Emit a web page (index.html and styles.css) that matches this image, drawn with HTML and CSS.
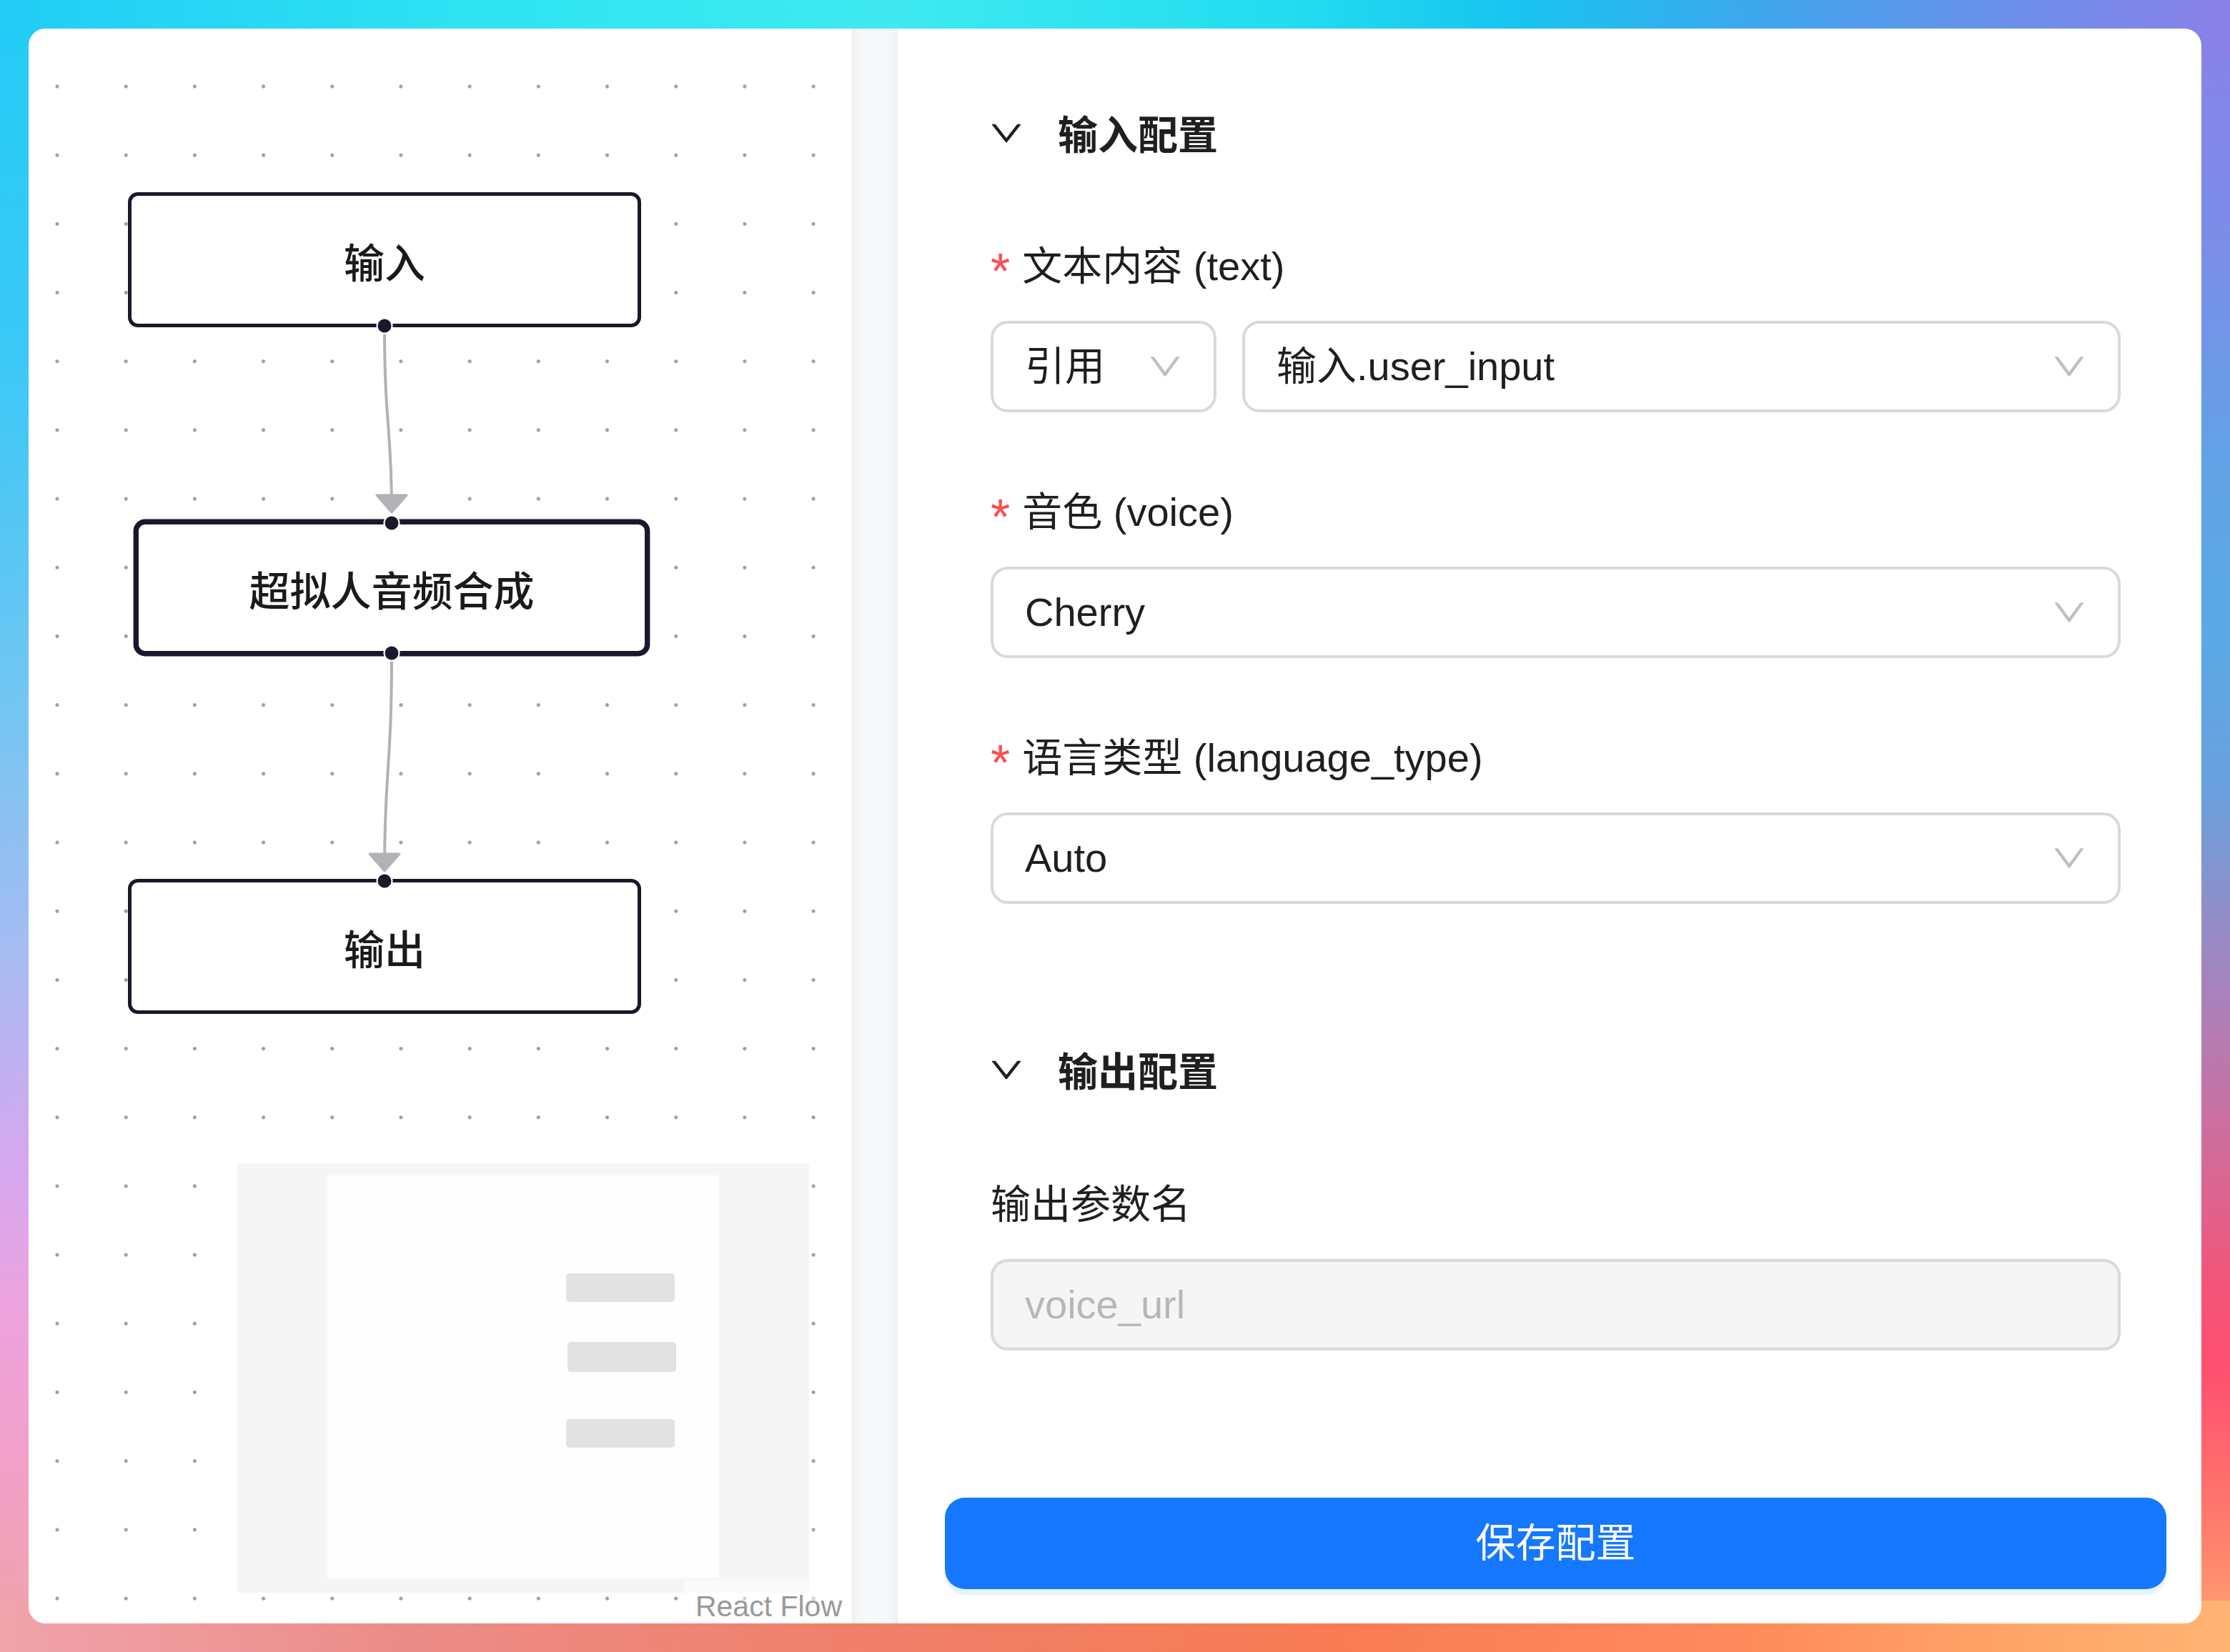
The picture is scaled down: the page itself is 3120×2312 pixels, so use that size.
FILE: index.html
```html
<!DOCTYPE html>
<html lang="zh-CN">
<head>
<meta charset="utf-8">
<title>超拟人音频合成</title>
<link rel="stylesheet" href="styles.css">
</head>
<body>
<div class="card">
  <div class="canvas">
    <svg class="edges" width="1152" height="2232" viewBox="0 0 1152 2232">
      <path class="edge" d="M498 418 C498 556 508 556 508 676"/>
      <polygon class="marker" points="487,653 529,653 508,677"/>
      <path class="edge" d="M508 874 C508 1036 498 1036 498 1176"/>
      <polygon class="marker" points="477,1155 519,1155 498,1179"/>
    </svg>

    <div class="node node-a">输入<span class="handle bottom"></span></div>
    <div class="node node-b selected"><span class="handle top"></span>超拟人音频合成<span class="handle bottom"></span></div>
    <div class="node node-c"><span class="handle top"></span>输出</div>

    <div class="minimap">
      <svg width="800" height="601" viewBox="0 0 800 601">
        <rect class="mm-mask" x="0" y="0" width="800" height="601"/>
        <rect class="mm-view" x="126" y="17" width="548" height="564"/>
        <rect class="mm-node" x="460" y="154" width="152" height="40" rx="5"/>
        <rect class="mm-node" x="462" y="250" width="152" height="42" rx="5"/>
        <rect class="mm-node" x="460" y="358" width="152" height="40" rx="5"/>
      </svg>
    </div>
    <div class="attribution">React Flow</div>
  </div>

  <div class="divider"></div>

  <div class="panel">
    <div class="form">
      <div class="section-head first">
        <svg class="caret" viewBox="64 64 896 896"><g transform="rotate(90 512 512)"><path d="M765.7 486.8L314.9 134.7A7.97 7.97 0 00302 141v77.3c0 4.9 2.3 9.6 6.1 12.6l360 281.1-360 281.1c-3.9 3-6.1 7.7-6.1 12.6V883c0 6.7 7.7 10.4 12.9 6.3l450.8-352.1a31.960 31.960 0 000-50.4z"/></g></svg>
        <span>输入配置</span>
      </div>

      <div class="field first-field">
        <div class="label"><span class="req">*</span>文本内容 (text)</div>
        <div class="row">
          <div class="select ref">
            <span class="value">引用</span>
            <svg class="arrow" viewBox="64 64 896 896"><path d="M884 256h-75c-5.1 0-9.9 2.5-12.9 6.6L512 654.2 227.9 262.6c-3-4.1-7.8-6.6-12.9-6.6h-75c-6.5 0-10.3 7.4-6.5 12.7l352.6 486.1c12.8 17.6 39 17.6 51.7 0l352.6-486.1c3.9-5.3.1-12.7-6.4-12.7z"/></svg>
          </div>
          <div class="select grow">
            <span class="value">输入.user_input</span>
            <svg class="arrow" viewBox="64 64 896 896"><path d="M884 256h-75c-5.1 0-9.9 2.5-12.9 6.6L512 654.2 227.9 262.6c-3-4.1-7.8-6.6-12.9-6.6h-75c-6.5 0-10.3 7.4-6.5 12.7l352.6 486.1c12.8 17.6 39 17.6 51.7 0l352.6-486.1c3.9-5.3.1-12.7-6.4-12.7z"/></svg>
          </div>
        </div>
      </div>

      <div class="field">
        <div class="label"><span class="req">*</span>音色 (voice)</div>
        <div class="select">
          <span class="value">Cherry</span>
          <svg class="arrow" viewBox="64 64 896 896"><path d="M884 256h-75c-5.1 0-9.9 2.5-12.9 6.6L512 654.2 227.9 262.6c-3-4.1-7.8-6.6-12.9-6.6h-75c-6.5 0-10.3 7.4-6.5 12.7l352.6 486.1c12.8 17.6 39 17.6 51.7 0l352.6-486.1c3.9-5.3.1-12.7-6.4-12.7z"/></svg>
        </div>
      </div>

      <div class="field">
        <div class="label"><span class="req">*</span>语言类型 (language_type)</div>
        <div class="select">
          <span class="value">Auto</span>
          <svg class="arrow" viewBox="64 64 896 896"><path d="M884 256h-75c-5.1 0-9.9 2.5-12.9 6.6L512 654.2 227.9 262.6c-3-4.1-7.8-6.6-12.9-6.6h-75c-6.5 0-10.3 7.4-6.5 12.7l352.6 486.1c12.8 17.6 39 17.6 51.7 0l352.6-486.1c3.9-5.3.1-12.7-6.4-12.7z"/></svg>
        </div>
      </div>

      <div class="section-head second">
        <svg class="caret" viewBox="64 64 896 896"><g transform="rotate(90 512 512)"><path d="M765.7 486.8L314.9 134.7A7.97 7.97 0 00302 141v77.3c0 4.9 2.3 9.6 6.1 12.6l360 281.1-360 281.1c-3.9 3-6.1 7.7-6.1 12.6V883c0 6.7 7.7 10.4 12.9 6.3l450.8-352.1a31.960 31.960 0 000-50.4z"/></g></svg>
        <span>输出配置</span>
      </div>

      <div class="field out">
        <div class="label">输出参数名</div>
        <div class="input disabled">voice_url</div>
      </div>
    </div>

    <div class="footer">
      <button class="save" type="button">保存配置</button>
    </div>
  </div>
</div>
</body>
</html>
```

FILE: styles.css
```css
* {
  box-sizing: border-box;
}

html,
body {
  margin: 0;
}

body {
  width: 3120px;
  height: 2312px;
  padding: 40px;
  font-family: "Liberation Sans", "Noto Sans CJK SC", sans-serif;
  color: rgba(0, 0, 0, 0.88);
  background-color: #9aa8e8;
  background-image:
    linear-gradient(to right, #22ccf6 0%, #2ee4f2 22%, #3eeaf0 40%, #22dcf0 58%, #18c4f0 68%, #42a4ec 80%, #6c90ea 90%, #8a80e8 100%),
    linear-gradient(to right, #f0a4ac 0%, #ec8c88 18%, #ef7f68 40%, #f87c54 60%, #ff8a5c 78%, #ffa468 90%, #ffb474 100%),
    linear-gradient(to bottom, #22ccf6 0%, #3cc8f6 22%, #70c6f2 42%, #a8bcf2 58%, #d4a8f0 70%, #eea2dc 80%, #f2a0c4 90%, #f0a2a6 100%),
    linear-gradient(to bottom, #8a80e8 0%, #7c8ce8 14%, #62a2e6 28%, #5aaae6 38%, #6aa0dc 48%, #a882bc 60%, #d46a98 70%, #f45478 78%, #ff5070 83%, #ff7a6c 92%, #ffa872 100%);
  background-size: 100% 72px, 100% 72px, 72px 100%, 72px 100%;
  background-position: left top, left bottom, left top, right top;
  background-repeat: no-repeat;
}

.card {
  display: flex;
  width: 100%;
  height: 100%;
  background: #fff;
  border-radius: 24px;
  overflow: hidden;
}

/* ---------- flow canvas ---------- */

.canvas {
  position: relative;
  flex: none;
  width: 1152px;
  height: 100%;
  overflow: hidden;
  background-color: #fff;
  background-image: radial-gradient(circle, #9c9ca4 0, #9c9ca4 2.1px, rgba(156, 156, 164, 0) 2.9px);
  background-size: 96.2px 96.2px;
  background-position: -8.1px 32.9px;
}

.edges {
  position: absolute;
  left: 0;
  top: 0;
}

.edge {
  fill: none;
  stroke: #b1b1b7;
  stroke-width: 4;
}

.marker {
  fill: #b1b1b7;
  stroke: #b1b1b7;
  stroke-width: 3;
  stroke-linejoin: round;
}

.node {
  position: absolute;
  width: 718px;
  height: 189px;
  display: flex;
  align-items: center;
  justify-content: center;
  border: 5px solid #1a192b;
  border-radius: 14px;
  background: #fff;
  color: #1a1a1a;
  font-family: "Noto Sans CJK SC", sans-serif;
  font-size: 57px;
  font-weight: 500;
  line-height: 80px;
}

.node-a {
  left: 139px;
  top: 229px;
}

.node-b {
  left: 149px;
  top: 689px;
  height: 187px;
}

.node-c {
  left: 139px;
  top: 1190px;
}

.selected {
  box-shadow: 0 0 0 2.4px #1a192b;
}

.handle {
  position: absolute;
  left: 50%;
  width: 23px;
  height: 23px;
  border: 2.5px solid #fff;
  border-radius: 50%;
  background: #1a192b;
}

.handle.top {
  top: -2.5px;
  transform: translate(-50%, -50%);
}

.handle.bottom {
  bottom: -2.5px;
  transform: translate(-50%, 50%);
}

.minimap {
  position: absolute;
  right: 60px;
  bottom: 43px;
  width: 800px;
  height: 601px;
}

.minimap svg {
  display: block;
}

.mm-mask {
  fill: #f5f5f5;
}

.mm-view {
  fill: #fefefe;
}

.mm-node {
  fill: #e2e2e2;
}

.attribution {
  position: absolute;
  right: 0;
  bottom: 0;
  width: 235px;
  height: 60px;
  padding: 16px 14px 0 0;
  text-align: right;
  font-family: "Liberation Sans", sans-serif;
  font-size: 41px;
  line-height: 40px;
  color: #999;
  background: rgba(255, 255, 255, 0.5);
}

/* ---------- divider ---------- */

.divider {
  flex: none;
  width: 64px;
  height: 100%;
  background: linear-gradient(to right, #eceef1 0, #f5f6f8 8px, #f8f9fb 50%, #f5f6f8 56px, #eef0f3 100%);
}

/* ---------- config panel ---------- */

.panel {
  flex: 1;
  min-width: 0;
  display: flex;
  flex-direction: column;
}

.form {
  padding: 0 113px 0 130px;
}

.section-head {
  display: flex;
  align-items: center;
  gap: 48px;
  height: 88px;
  font-family: "Noto Sans CJK SC", sans-serif;
  font-size: 56px;
  font-weight: 700;
  line-height: 88px;
  color: rgba(0, 0, 0, 0.88);
}

.section-head.first {
  margin-top: 101px;
}

.section-head.second {
  margin-top: 187px;
}

.caret {
  flex: none;
  width: 48px;
  height: 48px;
  margin-left: -2px;
  fill: rgba(0, 0, 0, 0.88);
}

.field {
  margin-top: 96px;
}

.field.first-field {
  margin-top: 100px;
}

.field.out {
  margin-top: 102px;
}

.label {
  height: 88px;
  margin-bottom: 32px;
  font-size: 56px;
  line-height: 88px;
  white-space: nowrap;
  color: rgba(0, 0, 0, 0.88);
}

.req {
  margin-right: 17px;
  color: #ff4d4f;
  font-family: "Liberation Sans", sans-serif;
  font-size: 70px;
  line-height: 1;
  vertical-align: -12px;
}

.row {
  display: flex;
  gap: 36px;
}

.select,
.input {
  display: flex;
  align-items: center;
  justify-content: space-between;
  height: 128px;
  padding: 0 44px;
  border: 4px solid #d9d9d9;
  border-radius: 24px;
  background: #fff;
  font-size: 56px;
  line-height: 88px;
  color: rgba(0, 0, 0, 0.88);
  white-space: nowrap;
}

.select.ref {
  flex: none;
  width: 316px;
}

.select.grow {
  flex: 1;
  min-width: 0;
}

.arrow {
  flex: none;
  width: 48px;
  height: 48px;
  fill: rgba(0, 0, 0, 0.25);
}

.input.disabled {
  background: #f5f5f5;
  color: rgba(0, 0, 0, 0.25);
}

.footer {
  margin-top: auto;
  padding: 0 49px 48px 66px;
}

.save {
  display: block;
  width: 100%;
  height: 128px;
  border: 0;
  border-radius: 28px;
  background: #1677ff;
  color: #fff;
  font-family: "Liberation Sans", "Noto Sans CJK SC", sans-serif;
  font-size: 56px;
  line-height: 88px;
  box-shadow: 0 8px 0 rgba(5, 145, 255, 0.1);
}
```
